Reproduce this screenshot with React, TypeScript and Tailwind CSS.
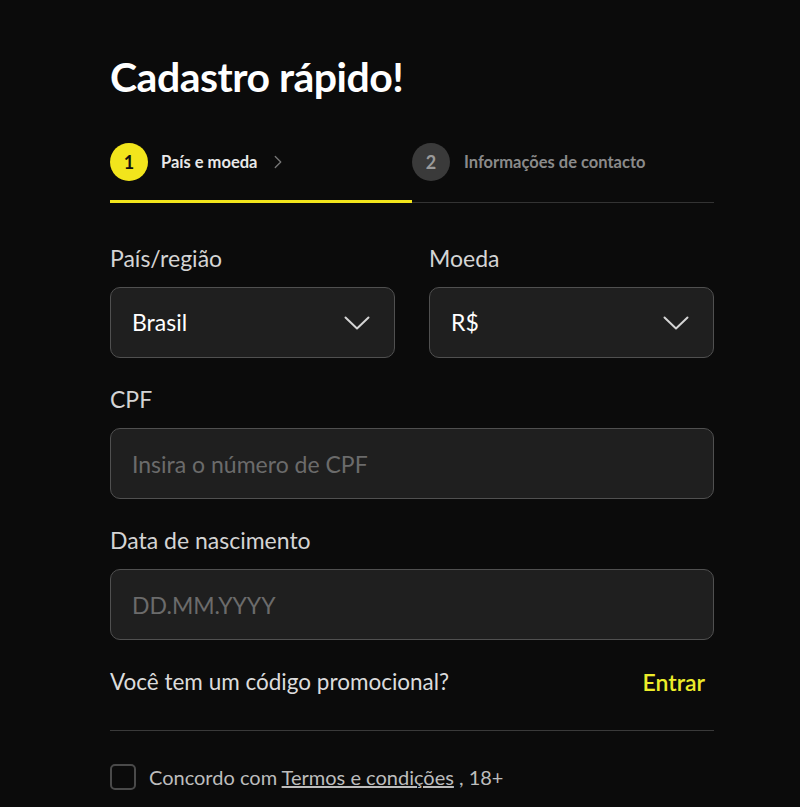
import { ChevronRight } from "lucide-react";

function Label({ children }: { children: React.ReactNode }) {
  return <div className="mb-[15px] text-[23px] leading-[28px] text-[#d4d4d4]">{children}</div>;
}

function Chevron() {
  return (
    <svg width="26" height="14" viewBox="0 0 26 14" fill="none" className="text-[#d4d4d4]">
      <path d="M1.5 1.5 13 12.5 24.5 1.5" stroke="currentColor" strokeWidth="2" strokeLinecap="round" strokeLinejoin="round" />
    </svg>
  );
}

function Select({ value }: { value: string }) {
  return (
    <div className="flex h-[71px] items-center justify-between rounded-[10px] border border-[#505050] bg-[#1f1f1f] pl-[21px] pr-[24px]">
      <span className="text-[23px] text-white">{value}</span>
      <Chevron />
    </div>
  );
}

function Input({ placeholder }: { placeholder: string }) {
  return (
    <input
      placeholder={placeholder}
      className="h-[71px] w-full rounded-[10px] border border-[#505050] bg-[#1f1f1f] px-[21px] text-[23px] text-white outline-none placeholder:text-[#6b6b6b]"
    />
  );
}

export default function App() {
  return (
    <div
      className="min-h-[807px] w-full bg-[#0b0b0b]"
      style={{ fontFamily: "Lato, 'Noto Sans', sans-serif" }}
    >
      <div className="ml-[110px] w-[604px] pt-[53px]">
        {/* Title */}
        <h1 className="text-[41px] font-bold leading-[48px] tracking-[-0.5px] text-white">
          Cadastro rápido!
        </h1>

        {/* Stepper */}
        <div className="mt-[42px] flex items-end">
          <div className="w-[302px] border-b-[3px] border-[#f2e51c] pb-[19px]">
            <div className="flex items-center">
              <div className="flex h-[38px] w-[38px] items-center justify-center rounded-full bg-[#f2e51c] text-[18px] font-bold text-[#111]">
                1
              </div>
              <span className="ml-[13px] text-[16.5px] font-bold text-[#e8e8e8]">País e moeda</span>
              <ChevronRight className="ml-[10px] h-[22px] w-[22px] text-[#777]" strokeWidth={1.4} />
            </div>
          </div>
          <div className="flex-1 border-b border-[#333] pb-[21px]">
            <div className="flex items-center">
              <div className="flex h-[38px] w-[38px] items-center justify-center rounded-full bg-[#3a3a3a] text-[18px] font-bold text-[#9a9a9a]">
                2
              </div>
              <span className="ml-[14px] text-[16.5px] font-bold text-[#8a8a8a]">Informações de contacto</span>
            </div>
          </div>
        </div>

        {/* País / Moeda */}
        <div className="mt-[41px] grid grid-cols-2 gap-[34px]">
          <div>
            <Label>País/região</Label>
            <Select value="Brasil" />
          </div>
          <div>
            <Label>Moeda</Label>
            <Select value="R$" />
          </div>
        </div>

        {/* CPF */}
        <div className="mt-[27px]">
          <Label>CPF</Label>
          <Input placeholder="Insira o número de CPF" />
        </div>

        {/* Data */}
        <div className="mt-[27px]">
          <Label>Data de nascimento</Label>
          <Input placeholder="DD.MM.YYYY" />
        </div>

        {/* Promo */}
        <div className="mt-[28px] flex items-center justify-between pr-[9px] leading-[28px]">
          <span className="text-[22.5px] text-[#dcdcdc]">Você tem um código promocional?</span>
          <span className="text-[23px] font-semibold text-[#ecec2a]">Entrar</span>
        </div>

        <div className="mt-[34px] h-px bg-[#3a3a3a]" />

        {/* Terms */}
        <div className="mt-[33px] flex items-center">
          <div className="h-[26px] w-[26px] rounded-[5px] border-2 border-[#4a4a4a]" />
          <span className="ml-[13px] text-[20px] leading-[26px] text-[#bdbdbd]">
            Concordo com <span className="underline">Termos e condições</span> , 18+
          </span>
        </div>
      </div>
    </div>
  );
}
